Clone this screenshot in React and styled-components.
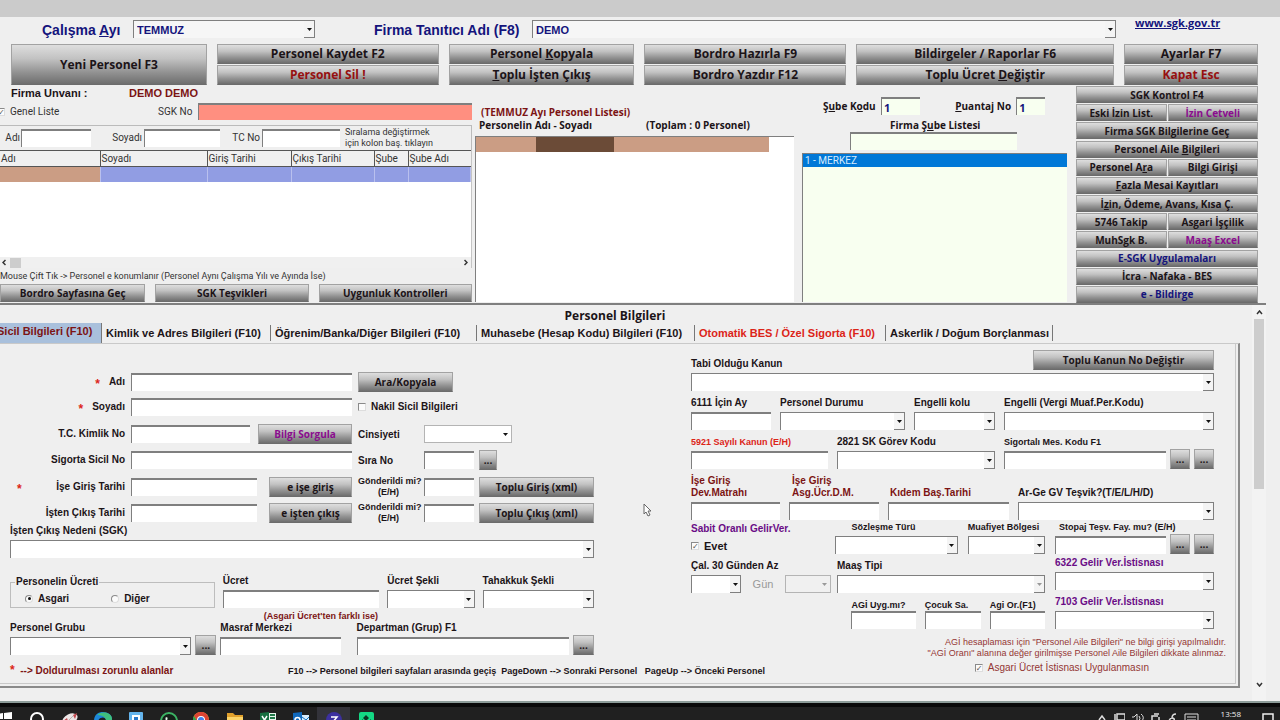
import React from "react";
import styled, { createGlobalStyle, css } from "styled-components";

const ui = '"Open Sans", "Noto Sans", sans-serif';
const arial = '"Liberation Sans", Arial, sans-serif';
const tahoma = 'Roboto, "Noto Sans", sans-serif';

const ink = "#1c1418";
const navy = "#14147c";
const maroon = "#7c1414";
const red = "#dc2418";
const purple = "#8a0c8e";
const violet = "#6a0c86";
const brick = "#943634";
const line = "#7f7f7f";

const Global = createGlobalStyle`
  * { box-sizing: border-box; }
  html, body { margin: 0; padding: 0; }
  body { background: #efefef; font-family: ${arial}; color: ${ink}; overflow: hidden; }
  input, select, button { font: inherit; color: inherit; margin: 0; padding: 0; border-radius: 0; outline: none; }
  u { text-underline-offset: 1px; }
`;

/* ---------- shared parts ---------- */

const Screen = styled.div`
  min-height: 100vh;
  display: flex;
  flex-direction: column;
  overflow: hidden;
  white-space: nowrap;
`;

const TitleStrip = styled.header`
  height: 17px;
  background: #cbcbcb;
`;

const Button = styled.button`
  width: 100%;
  min-width: 0;
  height: ${(p) => p.$h || 20}px;
  display: flex;
  align-items: center;
  justify-content: center;
  border: 1px solid #a2a2a2;
  border-bottom-color: #6c6c6c;
  background: linear-gradient(#dedede 0%, #c2c2c2 35%, #929292 70%, #6e6e6e 100%);
  color: ${(p) => p.$color || ink};
  font: 700 ${(p) => p.$size || 10}px/14px ${ui};
  white-space: pre;
`;

const TextBox = styled.input`
  display: block;
  width: 100%;
  min-width: 0;
  height: ${(p) => p.$h || 18}px;
  border: 0;
  border-top: 2px solid ${line};
  border-left: 1px solid ${line};
  background: ${(p) => p.$bg || "#fff"};
  color: ${navy};
  font: 700 11px/14px ${ui};
  padding-left: 2px;
`;

const ComboFrame = styled.span`
  display: grid;
  width: 100%;
  min-width: 0;
  height: 18px;
  border-top: 1px solid ${line};
  border-left: 1px solid ${line};
  background: ${(p) => p.$bg || "#fff"};
  ${(p) =>
    p.$soft &&
    css`
      border: 1px solid #b4b4b4;
    `}
  & > * { grid-area: 1 / 1; }
  select {
    appearance: none;
    width: 100%;
    min-width: 0;
    border: 0;
    background: transparent;
    color: ${navy};
    opacity: 1;
    font: 700 11px/16px ${arial};
    padding: 0 12px 0 3px;
  }
`;

const Arrow = styled.span`
  justify-self: end;
  width: 11px;
  display: flex;
  align-items: center;
  justify-content: center;
  pointer-events: none;
  ${(p) =>
    !p.$soft &&
    css`
      border-right: 1px solid ${line};
      border-bottom: 1px solid ${line};
      background: #f4f4f4;
    `}
`;

function Combo({ id, label, value = "", bg, soft, disabled }) {
  return (
    <ComboFrame $bg={bg} $soft={soft}>
      <select id={id} aria-label={label} disabled={disabled} defaultValue={value}>
        <option value={value}>{value}</option>
      </select>
      <Arrow $soft={soft}>
        <svg width="5" height="3" viewBox="0 0 5 3">
          <path d="M0 0h5L2.5 3z" fill={disabled ? "#999" : "#111"} />
        </svg>
      </Arrow>
    </ComboFrame>
  );
}

const Caption = styled.span`
  display: block;
  min-height: 12px;
  margin-bottom: ${(p) => (p.$tight ? 0 : 3)}px;
  padding-left: ${(p) => p.$indent || 0}px;
  color: ${(p) => p.$color || ink};
  font: 700 ${(p) => p.$size || 10}px/12px ${arial};
`;

const Stack = styled.label`
  display: block;
  min-width: 0;
`;

function Labeled({ text, color, size, tight, indent, children }) {
  return (
    <Stack>
      <Caption $color={color} $size={size} $tight={tight} $indent={indent}>
        {text}
      </Caption>
      {children}
    </Stack>
  );
}

const Row = styled.div`
  display: grid;
  grid-template-columns: ${(p) => p.$cols};
  column-gap: ${(p) => p.$gap ?? 9}px;
  align-items: ${(p) => p.$align || "end"};
  justify-content: ${(p) => p.$justify || "normal"};
  margin-top: ${(p) => p.$top || 0}px;
  padding-left: ${(p) => p.$left || 0}px;
  padding-right: ${(p) => p.$right || 0}px;
  height: ${(p) => (p.$h ? `${p.$h}px` : "auto")};
`;

const Column = styled.div`
  display: flex;
  flex-direction: column;
  min-width: 0;
  margin-top: ${(p) => p.$top || 0}px;
  padding-right: ${(p) => p.$right || 0}px;
`;

const CheckInput = styled.input`
  appearance: none;
  width: 8px;
  height: 8px;
  flex: none;
  display: grid;
  place-items: center;
  border: 1px solid #8a8a8a;
  border-right-color: #ddd;
  border-bottom-color: #ddd;
  background: #fbfbfb;
  border-radius: ${(p) => (p.type === "radio" ? "50%" : "0")};
  &:checked::after {
    content: "${(p) => (p.type === "radio" ? "" : "✓")}";
    font: 700 8px/8px "DejaVu Sans", sans-serif;
    color: #555;
    ${(p) =>
      p.type === "radio" &&
      css`
        width: 3px;
        height: 3px;
        border-radius: 50%;
        background: #111;
      `}
  }
`;

const CheckLabel = styled.label`
  display: flex;
  align-items: center;
  gap: 5px;
  color: ${(p) => p.$color || ink};
  font: ${(p) => p.$weight || 700} ${(p) => p.$size || 10}px/12px ${(p) => p.$font || arial};
`;

/* ---------- company selectors ---------- */

const SelectorBar = styled.div`
  display: grid;
  grid-template-columns: 91px 182fr 217px 584fr 164px;
  height: 27px;
  padding: 3px 0 0 42px;
  align-items: start;
`;

const BigLabel = styled.label`
  color: ${navy};
  font: 700 14px/20px ${arial};
  padding-left: ${(p) => p.$pad || 0}px;
`;

const SiteLink = styled.a`
  color: ${navy};
  font: 700 11px/12px ${ui};
  margin-left: 19px;
  margin-top: -3px;
`;

const Toolbar = styled.nav`
  display: grid;
  grid-template-columns: 196fr 222fr 186fr 202fr 258fr 134fr;
  grid-template-rows: 20px 20px;
  gap: 1px 10px;
  padding: 0 22px 0 11px;
  & > :first-child { grid-row: span 2; height: 41px; }
`;

/* ---------- upper work area ---------- */

const Upper = styled.section`
  display: grid;
  grid-template-columns: 475fr 327fr 274fr 182fr;
  padding: 1px 22px 1px 0;
  height: 218px;
`;

const CompanyLine = styled.div`
  display: grid;
  grid-template-columns: 118px 1fr;
  padding-left: 11px;
  font: 700 11px/14px ${arial};
  height: 17px;
  span { color: ${maroon}; }
`;

const RegistryLine = styled.div`
  display: grid;
  grid-template-columns: 158px 40px 1fr;
  height: 17px;
  align-items: center;
  & > :first-child { margin-left: -3px; }
`;

const PlainLabel = styled.label`
  color: #333;
  font: 400 10px/14px ${tahoma};
  text-align: ${(p) => p.$align || "left"};
  padding-right: ${(p) => p.$pad || 0}px;
`;

const FilterLine = styled.div`
  display: grid;
  grid-template-columns: 21px 70fr 53px 76fr 42px 78fr 131px;
  align-items: center;
  height: 25px;
  margin-top: 5px;
  border-top: 1px solid #bbb;
  border-right: 1px solid #bbb;
`;

const Hint = styled.p`
  margin: 0;
  padding-left: ${(p) => p.$left || 0}px;
  color: #333;
  font: 400 9px/11px ${tahoma};
`;

const GridBox = styled.div`
  flex: 1;
  background: #fff;
  border-right: 1px solid #c4c4c4;
  display: flex;
  flex-direction: column;
  justify-content: space-between;
`;

const StaffTable = styled.table`
  width: 100%;
  table-layout: fixed;
  border-collapse: collapse;
  th {
    height: 16px;
    padding: 0 0 0 1px;
    border-top: 1px solid #555;
    border-bottom: 1px solid #555;
    border-right: 1px solid #555;
    background: #f0f0f0;
    color: #333;
    text-align: left;
    font: 400 10px/14px ${tahoma};
  }
  th:last-child { border-right: 0; }
  td {
    height: 15px;
    padding: 0;
    background: #919de3;
    border-right: 1px solid #b9c0ee;
  }
  td:first-child { background: #cb9d84; }
`;

const Col = styled.col`
  width: ${(p) => (p.$w ? `${p.$w}px` : "auto")};
`;

const HScroll = styled.div`
  height: 11px;
  background: #f0f0f0;
  display: flex;
  align-items: center;
  padding: 0 3px 0 2px;
  gap: 4px;
  i { width: 11px; height: 10px; background: #cdcdcd; }
  svg:last-child { margin-left: auto; }
`;

const ListTitle = styled.h2`
  display: block;
  margin: ${(p) => p.$top || 0}px 0 0 ${(p) => p.$left || 0}px;
  color: ${(p) => p.$color || ink};
  font: 700 10px/13px ${ui};
`;

const ListBox = styled.div`
  flex: 1;
  margin-top: ${(p) => p.$top || 0}px;
  border-top: 1px solid ${line};
  border-left: 1px solid ${line};
  background: ${(p) => p.$bg || "#fff"};
`;

const SelectedStaff = styled.div`
  display: grid;
  grid-template-columns: 60fr 78fr 156fr 25fr;
  height: 15px;
  background: #cb9d84;
  span:nth-child(2) { background: #6b4b37; }
  span:nth-child(4) { background: #fff; }
`;

const SelectedBranch = styled.div`
  height: 13px;
  padding-left: 2px;
  background: #0078d7;
  color: #d8ecff;
  font: 400 10px/13px ${tahoma};
`;

const SideMenu = styled.nav`
  display: grid;
  grid-template-columns: 1fr 1fr;
  grid-auto-rows: 16px;
  column-gap: 1px;
  align-content: space-between;
`;

const SideButton = styled(Button)`
  grid-column: ${(p) => (p.$half ? "auto" : "1 / -1")};
  height: 17px;
`;

/* ---------- personnel panel ---------- */

const Panel = styled.section`
  flex: 1;
  display: grid;
  grid-template-columns: 1fr 14px;
  column-gap: 12px;
  margin-right: 14px;
  border-top: 2px solid ${line};
`;

const PanelMain = styled.div`
  min-width: 0;
`;

const PanelTitle = styled.h1`
  margin: 0;
  padding: 4px 10px 0 0;
  height: 18px;
  text-align: center;
  font: 700 12px/14px ${ui};
`;

const Tabs = styled.div`
  display: flex;
  align-items: flex-end;
  height: 20px;
`;

const Tab = styled.button`
  flex: 0 0 ${(p) => p.$w}px;
  height: ${(p) => (p.$on ? 20 : 16)}px;
  margin-bottom: ${(p) => (p.$on ? 0 : 2)}px;
  border: 0;
  border-right: 1px solid #777;
  background: ${(p) => (p.$on ? "#a9c0dc" : "transparent")};
  color: ${(p) => p.$color || ink};
  font: 700 11px/14px ${arial};
  text-align: left;
  padding: ${(p) => (p.$on ? "0 0 4px" : "0 0 0 4px")};
  display: flex;
  align-items: center;
  span { margin-left: ${(p) => (p.$on ? -3 : 0)}px; }
`;

const TabBody = styled.div`
  position: relative;
  border-top: 1px solid #c9c9c9;
  border-right: 2px solid #8a8a8a;
  border-bottom: 2px solid #8a8a8a;
  padding: 0 2px 2px 0;
`;

const TabInner = styled.div`
  display: grid;
  grid-template-columns: 584fr 523fr;
  column-gap: 97px;
  height: 340px;
  padding: 0 21px 0 10px;
  border-right: 1px solid #c9c9c9;
  border-bottom: 1px solid #c9c9c9;
`;

const EntryRows = styled.div`
  display: grid;
  row-gap: 8px;
  margin-bottom: 5px;
`;

const EntryRow = styled.div`
  display: grid;
  grid-template-columns: minmax(0, 121fr) minmax(0, 221fr) minmax(0, 242fr);
  align-items: center;
  height: 18px;
`;

const EntryLabel = styled.label`
  display: flex;
  justify-content: ${(p) => (p.$spread ? "space-between" : "flex-end")};
  align-items: center;
  gap: 9px;
  padding: 0 6px 0 7px;
  font: 700 10px/14px ${arial};
`;

const Star = styled.b`
  color: ${red};
  font: 700 12px/12px ${arial};
  padding-top: 4px;
`;

const EntryMid = styled.div`
  display: grid;
  grid-template-columns: ${(p) => p.$cols || "1fr"};
  column-gap: ${(p) => p.$gap || 0}px;
  align-items: center;
`;

const EntryEnd = styled.div`
  display: grid;
  grid-template-columns: ${(p) => p.$cols};
  column-gap: 5px;
  align-items: center;
  padding-left: 6px;
`;

const SmallLabel = styled.label`
  font: 700 ${(p) => p.$size || 9}px/11px ${arial};
  text-align: ${(p) => (p.$center ? "center" : "left")};
`;

const WageBox = styled.fieldset`
  display: flex;
  gap: 42px;
  height: 32px;
  min-width: 0;
  margin: 0;
  padding: 2px 0 0 14px;
  border: 1px solid #bdbdbd;
  legend { margin-left: -10px; padding: 0 1px; font: 700 10px/12px ${arial}; }
`;

const FootNotes = styled.div`
  display: grid;
  grid-template-columns: 278px auto;
  align-items: center;
  margin-top: 9px;
  font: 700 9px/12px ${arial};
  white-space: pre;
  span:first-child { color: ${maroon}; font-size: 10px; }
`;

const Note = styled.p`
  margin: ${(p) => p.$top || 0}px ${(p) => p.$right || 0}px 0 0;
  color: ${(p) => p.$color || brick};
  text-align: right;
  font: ${(p) => p.$weight || 400} 9px/${(p) => p.$lh || 11}px ${arial};
`;

const DimText = styled.span`
  color: #999;
  font: 400 11px/18px ${arial};
  text-align: center;
`;

const VScroll = styled.div`
  display: flex;
  flex-direction: column;
  align-items: center;
  padding: 5px 0 14px;
  background: #f3f3f3;
  i { width: 10px; height: 170px; margin-top: 4px; background: #cdcdcd; }
  svg:last-child { margin-top: auto; }
`;

const Pointer = styled.svg`
  position: absolute;
  left: 643px;
  top: 159px;
`;

/* ---------- taskbar ---------- */

const Taskbar = styled.footer`
  height: 19px;
  display: flex;
  align-items: flex-start;
  border-top: 2px solid #8d9c99;
  background: linear-gradient(#0a0a0a 0 4px, #202020 4px);
  overflow: hidden;
`;

const AppIcons = styled.div`
  display: flex;
  flex: 1;
  margin-left: -13px;
`;

const AppSlot = styled.span`
  flex: 0 0 33px;
  display: flex;
  justify-content: center;
  margin-top: 4px;
  padding-top: 5px;
  background: ${(p) => (p.$on ? "#33333a" : "transparent")};
`;

const Tray = styled.div`
  display: flex;
  align-items: flex-start;
  gap: 7px;
  padding: 10px 6px 0 0;
  svg { flex: none; }
`;

const Clock = styled.time`
  margin: -5px 14px 0 15px;
  color: #f0f0f0;
  font: 400 8px/12px ${ui};
`;

const Chevron = ({ d, w = 6, h = 8 }) => (
  <svg width={w} height={h} viewBox={`0 0 ${w} ${h}`}>
    <path d={d} fill="none" stroke="#333" strokeWidth="1.5" />
  </svg>
);

const tools = [
  { t: "Yeni Personel F3" },
  { t: "Personel Kaydet F2" },
  { t: <>Personel <u>K</u>opyala</> },
  { t: "Bordro Hazırla F9" },
  { t: "Bildirgeler / Raporlar F6" },
  { t: "Ayarlar F7" },
  { t: "Personel Sil !", c: "#961010" },
  { t: <><u>T</u>oplu İşten Çıkış</> },
  { t: "Bordro Yazdır F12" },
  { t: <>Toplu Ücret <u>D</u>eğiştir</> },
  { t: "Kapat Esc", c: "#961010" },
];

const sideItems = [
  { t: "SGK Kontrol F4" },
  { t: "Eski İzin List.", half: true },
  { t: "İzin Cetveli", half: true, c: purple },
  { t: "Firma SGK Bilgilerine Geç" },
  { t: <>Personel Aile <u>B</u>ilgileri</> },
  { t: <>Personel A<u>r</u>a</>, half: true },
  { t: "Bilgi Girişi", half: true },
  { t: <><u>F</u>azla Mesai Kayıtları</> },
  { t: <>İ<u>z</u>in, Ödeme, Avans, Kısa Ç.</> },
  { t: "5746 Takip", half: true },
  { t: "Asgari İşçilik", half: true },
  { t: "MuhSgk B.", half: true },
  { t: "Maaş Excel", half: true, c: purple },
  { t: "E-SGK Uygulamaları", c: navy },
  { t: "İcra - Nafaka - BES" },
  { t: "e - Bildirge", c: navy },
];

const tabs = [
  { t: "Sicil Bilgileri (F10)", w: 102, on: true, c: maroon },
  { t: "Kimlik ve Adres Bilgileri (F10)", w: 169 },
  { t: "Öğrenim/Banka/Diğer Bilgileri (F10)", w: 206 },
  { t: "Muhasebe (Hesap Kodu) Bilgileri (F10)", w: 218 },
  { t: "Otomatik BES / Özel Sigorta (F10)", w: 191, c: red },
  { t: "Askerlik / Doğum Borçlanması", w: 167 },
];

function StaffSearch() {
  return (
    <Column $right={3}>
      <CompanyLine>
        Firma Unvanı :<span>DEMO DEMO</span>
      </CompanyLine>
      <RegistryLine>
        <CheckLabel $weight={400} $font={tahoma} $color="#333">
          <CheckInput type="checkbox" defaultChecked />
          Genel Liste
        </CheckLabel>
        <PlainLabel htmlFor="sgkno">SGK No</PlainLabel>
        <TextBox id="sgkno" $bg="#ff8f80" $h={17} />
      </RegistryLine>
      <FilterLine>
        <PlainLabel htmlFor="f-adi" $align="right" $pad={1}>Adı</PlainLabel>
        <TextBox id="f-adi" />
        <PlainLabel htmlFor="f-soyadi" $align="right" $pad={2}>Soyadı</PlainLabel>
        <TextBox id="f-soyadi" />
        <PlainLabel htmlFor="f-tc" $align="right" $pad={2}>TC No</PlainLabel>
        <TextBox id="f-tc" />
        <Hint $left={5}>Sıralama değiştirmek<br />için kolon baş. tıklayın</Hint>
      </FilterLine>
      <GridBox>
        <StaffTable>
          <colgroup>
            <Col $w={100} />
            <Col $w={107} />
            <Col $w={84} />
            <Col $w={83} />
            <Col $w={34} />
            <Col />
          </colgroup>
          <thead>
            <tr>
              <th>Adı</th>
              <th>Soyadı</th>
              <th>Giriş Tarihi</th>
              <th>Çıkış Tarihi</th>
              <th>Şube</th>
              <th>Şube Adı</th>
            </tr>
          </thead>
          <tbody>
            <tr><td /><td /><td /><td /><td /><td /></tr>
          </tbody>
        </StaffTable>
        <HScroll>
          <Chevron w={4} h={7} d="M3.5 1L1 3.5L3.5 6" />
          <i />
          <Chevron w={4} h={7} d="M.5 1L3 3.5L.5 6" />
        </HScroll>
      </GridBox>
      <Row $cols="1fr" $h={16} $align="center">
        <Hint>Mouse Çift Tık -&gt; Personel e konumlanır (Personel Aynı Çalışma Yılı ve Ayında İse)</Hint>
      </Row>
      <Row $cols="145fr 153fr 153fr" $gap={10}>
        <Button $h={18}>Bordro Sayfasına Geç</Button>
        <Button $h={18}>SGK Teşvikleri</Button>
        <Button $h={18}>Uygunluk Kontrolleri</Button>
      </Row>
    </Column>
  );
}

function StaffList() {
  return (
    <Column $right={8}>
      <ListTitle $top={20} $left={6} $color={maroon}>(TEMMUZ Ayı Personel Listesi)</ListTitle>
      <Row $cols="167px 1fr" $gap={0} $left={4}>
        <ListTitle>Personelin Adı - Soyadı</ListTitle>
        <ListTitle>(Toplam : 0 Personel)</ListTitle>
      </Row>
      <ListBox $top={4}>
        <SelectedStaff><span /><span /><span /><span /></SelectedStaff>
      </ListBox>
    </Column>
  );
}

function BranchPanel() {
  const cream = "#f8fff0";
  return (
    <Column $right={9}>
      <Row $cols="76px 41fr 90px 30fr 19px" $gap={3} $top={11} $align="center">
        <ListTitle as="label" htmlFor="sube" $left={21}>Ş<u>u</u>be K<u>o</u>du</ListTitle>
        <TextBox id="sube" $bg={cream} defaultValue="1" />
        <ListTitle as="label" htmlFor="puantaj" $left={32}><u>P</u>uantaj No</ListTitle>
        <TextBox id="puantaj" $bg={cream} defaultValue="1" />
      </Row>
      <Row $cols="48fr 167fr 50fr" $gap={0} $top={4}>
        <span />
        <div>
          <ListTitle as="label" htmlFor="subelist" $left={40}>Firma Ş<u>u</u>be Listesi</ListTitle>
          <TextBox id="subelist" $bg={cream} />
        </div>
      </Row>
      <ListBox $top={3} $bg={cream}>
        <SelectedBranch>1 - MERKEZ</SelectedBranch>
      </ListBox>
    </Column>
  );
}

function LeftForm() {
  const sent = "61px 50px 1fr";
  return (
    <Column $top={28}>
      <EntryRows>
        <EntryRow>
          <EntryLabel htmlFor="adi"><Star>*</Star>Adı</EntryLabel>
          <TextBox id="adi" />
          <EntryEnd $cols="95px"><Button>Ara/Kopyala</Button></EntryEnd>
        </EntryRow>
        <EntryRow>
          <EntryLabel htmlFor="soyadi"><Star>*</Star>Soyadı</EntryLabel>
          <TextBox id="soyadi" />
          <EntryEnd $cols="1fr">
            <CheckLabel><CheckInput type="checkbox" />Nakil Sicil Bilgileri</CheckLabel>
          </EntryEnd>
        </EntryRow>
        <EntryRow>
          <EntryLabel htmlFor="tc">T.C. Kimlik No</EntryLabel>
          <EntryMid $cols="119fr 94fr" $gap={8}>
            <TextBox id="tc" />
            <Button $color={purple}>Bilgi Sorgula</Button>
          </EntryMid>
          <EntryEnd $cols="61px 88px">
            <SmallLabel $size={10} htmlFor="cins">Cinsiyeti</SmallLabel>
            <Combo id="cins" soft />
          </EntryEnd>
        </EntryRow>
        <EntryRow>
          <EntryLabel htmlFor="sicil">Sigorta Sicil No</EntryLabel>
          <TextBox id="sicil" />
          <EntryEnd $cols="61px 50px 18px">
            <SmallLabel $size={10} htmlFor="sira">Sıra No</SmallLabel>
            <TextBox id="sira" />
            <Button>...</Button>
          </EntryEnd>
        </EntryRow>
        <EntryRow>
          <EntryLabel htmlFor="giris" $spread><Star>*</Star>İşe Giriş Tarihi</EntryLabel>
          <EntryMid $cols="126fr 83fr" $gap={12}>
            <TextBox id="giris" />
            <Button>e işe giriş</Button>
          </EntryMid>
          <EntryEnd $cols={sent}>
            <SmallLabel $center htmlFor="gon1">Gönderildi mi?<br />(E/H)</SmallLabel>
            <TextBox id="gon1" />
            <Button>Toplu Giriş (xml)</Button>
          </EntryEnd>
        </EntryRow>
        <EntryRow>
          <EntryLabel htmlFor="cikis">İşten Çıkış Tarihi</EntryLabel>
          <EntryMid $cols="126fr 83fr" $gap={12}>
            <TextBox id="cikis" />
            <Button>e işten çıkış</Button>
          </EntryMid>
          <EntryEnd $cols={sent}>
            <SmallLabel $center htmlFor="gon2">Gönderildi mi?<br />(E/H)</SmallLabel>
            <TextBox id="gon2" />
            <Button>Toplu Çıkış (xml)</Button>
          </EntryEnd>
        </EntryRow>
      </EntryRows>
      <Labeled text="İşten Çıkış Nedeni (SGK)"><Combo /></Labeled>
      <Row $cols="204fr 156fr 87fr 111fr" $gap={8} $top={17}>
        <WageBox>
          <legend>Personelin Ücreti</legend>
          <CheckLabel><CheckInput type="radio" name="ucret" defaultChecked />Asgari</CheckLabel>
          <CheckLabel><CheckInput type="radio" name="ucret" />Diğer</CheckLabel>
        </WageBox>
        <Labeled text="Ücret"><TextBox /></Labeled>
        <Labeled text="Ücret Şekli"><Combo /></Labeled>
        <Labeled text="Tahakkuk Şekli"><Combo /></Labeled>
      </Row>
      <Note $top={2} $right={216} $color={maroon} $weight={700} $lh={12}>(Asgari Ücret'ten farklı ise)</Note>
      <Row $cols="181fr 21px 120fr 8px 212fr 21px" $gap={4}>
        <Labeled text="Personel Grubu"><Combo /></Labeled>
        <Button>...</Button>
        <Labeled text="Masraf Merkezi"><TextBox /></Labeled>
        <span />
        <Labeled text="Departman (Grup) F1"><TextBox /></Labeled>
        <Button>...</Button>
      </Row>
      <FootNotes>
        <span><Star>*</Star>  --&gt; Doldurulması zorunlu alanlar</span>
        <span>F10 --&gt; Personel bilgileri sayfaları arasında geçiş  PageDown --&gt; Sonraki Personel   PageUp --&gt; Önceki Personel</span>
      </FootNotes>
    </Column>
  );
}

function RightForm() {
  return (
    <Column $top={6}>
      <Row $cols="342fr 181fr" $gap={0} $h={20}>
        <Caption as="label" htmlFor="kanun" $tight>Tabi Olduğu Kanun</Caption>
        <Button>Toplu Kanun No Değiştir</Button>
      </Row>
      <Row $cols="1fr" $top={3}><Combo id="kanun" /></Row>
      <Row $cols="80fr 125fr 81fr 210fr" $top={6}>
        <Labeled text="6111 İçin Ay"><TextBox /></Labeled>
        <Labeled text="Personel Durumu"><Combo /></Labeled>
        <Labeled text="Engelli kolu"><Combo /></Labeled>
        <Labeled text="Engelli (Vergi Muaf.Per.Kodu)"><Combo /></Labeled>
      </Row>
      <Row $cols="137fr 158fr 210fr" $top={6}>
        <Labeled text="5921 Sayılı Kanun (E/H)" size={9} color={red}><TextBox /></Labeled>
        <Labeled text="2821 SK Görev Kodu"><Combo /></Labeled>
        <Row $cols="1fr 20px 20px" $gap={4}>
          <Labeled text="Sigortalı Mes. Kodu F1" size={9}><TextBox /></Labeled>
          <Button>...</Button>
          <Button>...</Button>
        </Row>
      </Row>
      <Row $cols="89fr 90fr 121fr 196fr" $top={6}>
        <Labeled text={<>İşe Giriş<br />Dev.Matrahı</>} color={maroon}><TextBox /></Labeled>
        <Labeled text={<>İşe Giriş<br />Asg.Ücr.D.M.</>} color={maroon} indent={3}><TextBox /></Labeled>
        <Labeled text="Kıdem Baş.Tarihi" color={maroon} indent={2}><TextBox /></Labeled>
        <Labeled text="Ar-Ge GV Teşvik?(T/E/L/H/D)"><Combo /></Labeled>
      </Row>
      <Row $cols="354fr 159fr" $gap={10} $top={1} $align="start">
        <Column>
          <Row $cols="134fr 122fr 77fr" $gap={10}>
            <Column>
              <Caption $color={violet}>Sabit Oranlı GelirVer.</Caption>
              <Row $cols="1fr" $h={16} $align="center">
                <CheckLabel $size={11}><CheckInput type="checkbox" defaultChecked />Evet</CheckLabel>
              </Row>
            </Column>
            <Labeled text="Sözleşme Türü" size={9} indent={16}><Combo /></Labeled>
            <Labeled text="Muafiyet Bölgesi" size={9}><Combo /></Labeled>
          </Row>
          <Row $cols="50fr 32px 46fr 208fr" $gap={6} $top={6}>
            <Labeled text="Çal. 30 Günden Az"><Combo /></Labeled>
            <DimText>Gün</DimText>
            <Combo label="Gün" soft disabled bg="#f0f0f0" />
            <Labeled text="Maaş Tipi"><Combo disabled /></Labeled>
          </Row>
          <Row $cols="151fr 64fr 56fr 55fr" $top={6}>
            <span />
            <Labeled text="AGİ Uyg.mı?" size={9} tight><TextBox /></Labeled>
            <Labeled text="Çocuk Sa." size={9} tight><TextBox /></Labeled>
            <Labeled text="Agi Or.(F1)" size={9} tight><TextBox /></Labeled>
          </Row>
        </Column>
        <Column>
          <Row $cols="1fr 20px 20px" $gap={4}>
            <Labeled text="Stopaj Teşv. Fay. mu? (E/H)" size={9} indent={4}><TextBox /></Labeled>
            <Button>...</Button>
            <Button>...</Button>
          </Row>
          <Row $cols="1fr" $top={3}>
            <Labeled text="6322 Gelir Ver.İstisnası" color={violet}><Combo /></Labeled>
          </Row>
          <Row $cols="1fr" $top={6}>
            <Labeled text="7103 Gelir Ver.İstisnası" color={violet}><Combo /></Labeled>
          </Row>
        </Column>
      </Row>
      <Note $top={8} $right={-12}>AGİ hesaplaması için "Personel Aile Bilgileri" ne bilgi girişi yapılmalıdır.</Note>
      <Note $right={-12}>"AGİ Oranı" alanına değer girilmişse Personel Aile Bilgileri dikkate alınmaz.</Note>
      <Row $cols="auto" $top={3} $justify="end" $right={65}>
        <CheckLabel $weight={400} $color={brick}>
          <CheckInput type="checkbox" defaultChecked />
          Asgari Ücret İstisnası Uygulanmasın
        </CheckLabel>
      </Row>
    </Column>
  );
}

function TaskbarRow() {
  return (
    <Taskbar>
      <AppIcons>
        <AppSlot>
          <svg width="16" height="16"><path d="M0 2l7-1v6H0zM8 1l8-1v7H8zM0 8h7v6l-7-1zM8 8h8v8l-8-1z" fill="#fff" /></svg>
        </AppSlot>
        <AppSlot>
          <svg width="16" height="16"><circle cx="8" cy="7" r="6" fill="none" stroke="#fff" strokeWidth="2" /></svg>
        </AppSlot>
        <AppSlot>
          <svg width="18" height="16"><ellipse cx="9" cy="7" rx="8" ry="5" fill="#ece6e6" transform="rotate(-25 9 7)" /><path d="M2 9l4-3 1 3-3 4zM12 3l4-2-2 6z" fill="#c24a50" /><path d="M7 9l5-5" stroke="#b8b0b0" /></svg>
        </AppSlot>
        <AppSlot>
          <svg width="18" height="16"><path d="M0 9C0 3 4 0 9 0s9 3 9 7-6 4-6 2c1-4-6-5-8 0v7H2C1 14 0 12 0 9z" fill="#1c86d8" /><path d="M3 3C9-2 18 1 18 7c0 3-6 4-6 2 0-5-6-6-9-6z" fill="#3fc07c" /></svg>
        </AppSlot>
        <AppSlot>
          <svg width="14" height="16"><rect width="14" height="16" rx="1" fill="#64b4ec" /><path d="M3 3h8v9H3z" fill="#fff" /><path d="M5 5h4v7H5z" fill="#2a78c8" /></svg>
        </AppSlot>
        <AppSlot>
          <svg width="18" height="18"><circle cx="9" cy="9" r="8" fill="#142018" stroke="#3cb464" strokeWidth="2" /><path d="M6 5c-2 3 2 8 6 7l1-2-3-1-1 1-2-3 1-1z" fill="#e8f8ec" /></svg>
        </AppSlot>
        <AppSlot>
          <svg width="17" height="17"><circle cx="8" cy="8" r="8" fill="#e8b428" /><path d="M1 4a8 8 0 0 1 14 0l1 4H8L4 9z" fill="#dc4434" /><path d="M1 4l5 8-1 4A8 8 0 0 1 1 4z" fill="#34a04c" /><circle cx="8" cy="8" r="4" fill="#fff" /><circle cx="8" cy="8" r="3" fill="#4080ec" /></svg>
        </AppSlot>
        <AppSlot>
          <svg width="16" height="16"><path d="M0 1h6l2 2h8v13H0z" fill="#e0a02c" /><path d="M0 5h16v11H0z" fill="#fcd468" /></svg>
        </AppSlot>
        <AppSlot>
          <svg width="16" height="16"><path d="M6 1h10v14H6z" fill="#e8f4ec" /><path d="M10 3h5M10 6h5M10 9h5" stroke="#207848" strokeWidth="2" /><path d="M0 1l9-1v16l-9-2z" fill="#187040" /><path d="M2 4l5 8M7 4l-5 8" stroke="#fff" strokeWidth="1.5" /></svg>
        </AppSlot>
        <AppSlot>
          <svg width="16" height="16"><path d="M7 3h9v10H7z" fill="#d8ecfc" /><path d="M9 5l4 3 3-3" stroke="#1070c0" fill="none" /><path d="M0 1l9-1v16l-9-2z" fill="#1068bc" /><circle cx="4.5" cy="8" r="2.5" fill="none" stroke="#fff" strokeWidth="1.5" /></svg>
        </AppSlot>
        <AppSlot $on>
          <svg width="16" height="16"><circle cx="8" cy="8" r="8" fill="#3c30a0" /><path d="M5 5h6L6 11h5" stroke="#fff" strokeWidth="1.5" fill="none" /></svg>
        </AppSlot>
        <AppSlot>
          <svg width="15" height="16"><rect width="15" height="16" rx="2" fill="#14d884" /><path d="M7 3l3 3-3 3-3-3zM3 7l3 3-3 3zM11 7l3 3-3 3z" fill="#0c3424" /></svg>
        </AppSlot>
      </AppIcons>
      <Tray>
        <svg width="9" height="8"><path d="M1 7l3-4 3 4" fill="none" stroke="#ddd" strokeWidth="1.5" /></svg>
        <svg width="11" height="8"><path d="M1 1v7M3 1h8v6H3z" fill="none" stroke="#ddd" strokeWidth="1.5" /></svg>
        <svg width="12" height="8"><path d="M0 4h2l3-3v7M7 3q2 2 0 5M9 1q4 3 1 7" fill="none" stroke="#ddd" /></svg>
        <svg width="10" height="8"><path d="M1 8V3h6M3 1h5M8 4v4" fill="none" stroke="#ddd" strokeWidth="1.5" /></svg>
        <svg width="9" height="8"><path d="M1 8q1-3 3-3 0-4 4-4M4 5q3 0 2 3" fill="none" stroke="#ddd" strokeWidth="1.5" /></svg>
        <svg width="15" height="8"><path d="M1 8V1h13v7M3 4h9M3 7h9" fill="none" stroke="#ddd" /></svg>
        <Clock>13:58</Clock>
        <svg width="12" height="8"><path d="M1 8V1h10v7" fill="none" stroke="#eee" strokeWidth="1.5" /></svg>
      </Tray>
    </Taskbar>
  );
}

export default function App() {
  return (
    <Screen>
      <Global />
      <TitleStrip />
      <SelectorBar>
        <BigLabel htmlFor="ay">Çalışma <u>A</u>yı</BigLabel>
        <Combo id="ay" value="TEMMUZ" bg="#f6f6f6" />
        <BigLabel htmlFor="firma" $pad={59}>Firma Tanıtıcı Adı (F8)</BigLabel>
        <Combo id="firma" value="DEMO" bg="#f6f6f6" />
        <SiteLink href="#sgk">www.sgk.gov.tr</SiteLink>
      </SelectorBar>
      <Toolbar>
        {tools.map((b, i) => (
          <Button key={i} $size={12} $color={b.c}>{b.t}</Button>
        ))}
      </Toolbar>
      <Upper>
        <StaffSearch />
        <StaffList />
        <BranchPanel />
        <SideMenu>
          {sideItems.map((b, i) => (
            <SideButton key={i} $half={b.half} $color={b.c}>{b.t}</SideButton>
          ))}
        </SideMenu>
      </Upper>
      <Panel>
        <PanelMain>
          <PanelTitle>Personel Bilgileri</PanelTitle>
          <Tabs role="tablist">
            {tabs.map((t) => (
              <Tab key={t.t} role="tab" aria-selected={!!t.on} $on={t.on} $w={t.w} $color={t.c}>
                <span>{t.t}</span>
              </Tab>
            ))}
          </Tabs>
          <TabBody>
            <TabInner>
              <LeftForm />
              <RightForm />
            </TabInner>
            <Pointer width="9" height="14" viewBox="0 0 9 14">
              <path d="M1 1v10l2-2 2 4 2-1-2-4h3z" fill="#fff" stroke="#666" />
            </Pointer>
          </TabBody>
        </PanelMain>
        <VScroll>
          <Chevron w={7} h={5} d="M1 4L3.5 1L6 4" />
          <i />
          <Chevron w={7} h={5} d="M1 1L3.5 4L6 1" />
        </VScroll>
      </Panel>
      <TaskbarRow />
    </Screen>
  );
}
